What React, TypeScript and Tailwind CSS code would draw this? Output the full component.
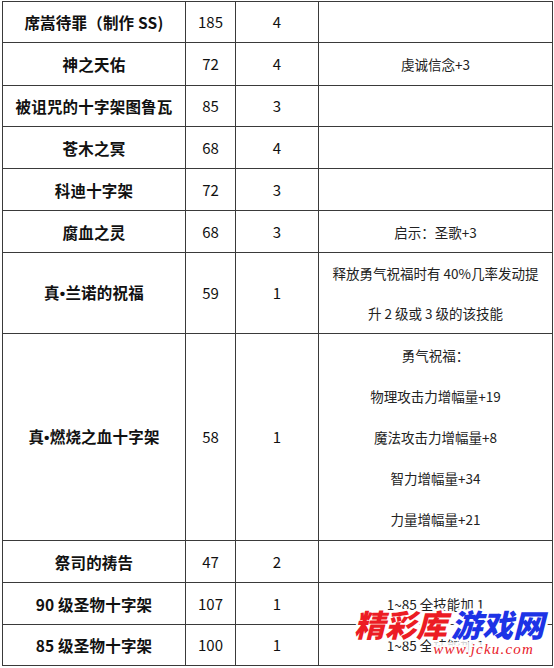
import React from 'react';

// One row of the equipment table
interface Row {
  name: React.ReactNode;
  key: string;
  lv: string;
  count: string;
  desc: string[];
  h: string;
  lead: string;
}

const Dot = () => <span className="font-['Liberation_Sans',sans-serif]">•</span>;

const ROWS: Row[] = [
  { key: 'a', name: '席嵩待罪（制作 SS)', lv: '185', count: '4', desc: [], h: 'h-[41px]', lead: '' },
  { key: 'b', name: '神之天佑', lv: '72', count: '4', desc: ['虔诚信念+3'], h: 'h-[43px]', lead: '' },
  { key: 'c', name: '被诅咒的十字架图鲁瓦', lv: '85', count: '3', desc: [], h: 'h-[41px]', lead: '' },
  { key: 'd', name: '苍木之冥', lv: '68', count: '4', desc: [], h: 'h-[42px]', lead: '' },
  { key: 'e', name: '科迪十字架', lv: '72', count: '3', desc: [], h: 'h-[42px]', lead: '' },
  { key: 'f', name: '腐血之灵', lv: '68', count: '3', desc: ['启示：圣歌+3'], h: 'h-[42px]', lead: '' },
  {
    key: 'g',
    name: (
      <>
        真<Dot />兰诺的祝福
      </>
    ),
    lv: '59',
    count: '1',
    desc: ['释放勇气祝福时有 40%几率发动提', '升 2 级或 3 级的该技能'],
    h: 'h-[81px]',
    lead: 'leading-[40px]',
  },
  {
    key: 'h',
    name: (
      <>
        真<Dot />燃烧之血十字架
      </>
    ),
    lv: '58',
    count: '1',
    desc: ['勇气祝福：', '物理攻击力增幅量+19', '魔法攻击力增幅量+8', '智力增幅量+34', '力量增幅量+21'],
    h: 'h-[207px]',
    lead: 'leading-[41px]',
  },
  { key: 'i', name: '祭司的祷告', lv: '47', count: '2', desc: [], h: 'h-[42px]', lead: '' },
  { key: 'j', name: '90 级圣物十字架', lv: '107', count: '1', desc: ['1~85 全技能加 1'], h: 'h-[42px]', lead: '' },
  { key: 'k', name: '85 级圣物十字架', lv: '100', count: '1', desc: ['1~85 全技能加 1'], h: 'h-[41px]', lead: '' },
];

const cell = 'border border-[#3a3a3a] text-center align-middle p-0';
const halo =
  '[text-shadow:0_0_2px_#fff,2px_0_0_#fff,-2px_0_0_#fff,0_2px_0_#fff,0_-2px_0_#fff,2px_2px_0_#fff,-2px_-2px_0_#fff,2px_-2px_0_#fff,-2px_2px_0_#fff]';

const App: React.FC = () => {
  return (
    <div className="relative w-[554px] h-[668px] bg-white overflow-hidden font-['Noto_Sans_CJK_SC','Noto_Sans',sans-serif] text-[#111]">
      <div className="pl-[2px] pt-[1px]">
        <table className="w-[550px] table-fixed border-collapse">
          <colgroup>
            <col className="w-[183px]" />
            <col className="w-[50px]" />
            <col className="w-[83px]" />
            <col className="w-[234px]" />
          </colgroup>
          <tbody>
            {ROWS.map((r) => (
              <tr key={r.key} className={r.h}>
                <td className={`${cell} font-bold text-[15.5px] leading-[20px] tracking-[0.2px]`}>{r.name}</td>
                <td className={`${cell} text-[15px] leading-[20px]`}>{r.lv}</td>
                <td className={`${cell} text-[15px] leading-[20px]`}>{r.count}</td>
                <td className={`${cell} text-[13.5px] leading-[20px] text-[#222]`}>
                  {r.desc.map((d) => (
                    <div key={d} className={r.lead}>
                      {d}
                    </div>
                  ))}
                </td>
              </tr>
            ))}
          </tbody>
        </table>
      </div>

      {/* site watermark */}
      <div className="absolute left-[354px] top-[606px] flex flex-col items-end">
        <div className={`flex items-center gap-[4px] italic font-black text-[31px] leading-[36px] ${halo}`}>
          <span className="text-[#ec1c24]">精彩库</span>
          <span className="text-[#1d33e6]">游戏网</span>
        </div>
        <div
          className={`mr-[8px] px-[2px] bg-white/80 font-['Liberation_Serif',serif] italic text-[15px] leading-[15px] tracking-[1.2px] text-[#e8202a] ${halo}`}
        >
          www.jcku.com
        </div>
      </div>
    </div>
  );
};

export default App;
